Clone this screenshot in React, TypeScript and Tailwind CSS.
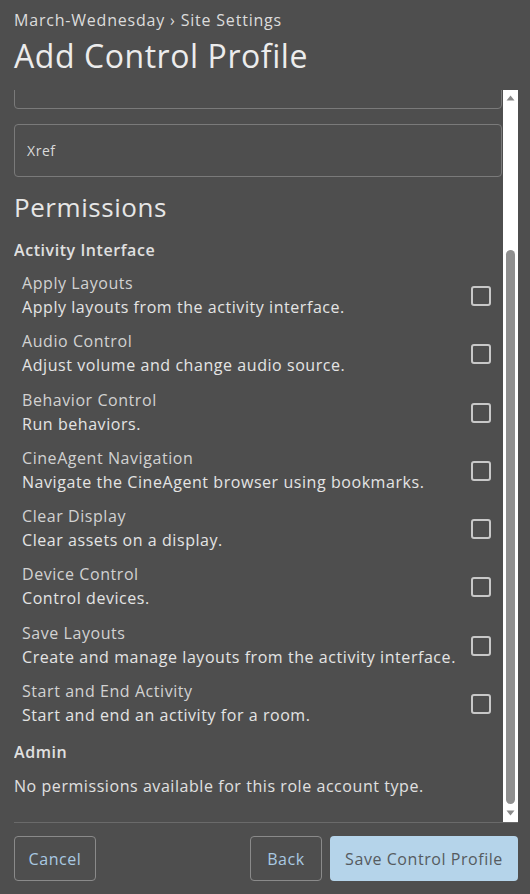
const permissions = [
  { title: "Apply Layouts", desc: "Apply layouts from the activity interface." },
  { title: "Audio Control", desc: "Adjust volume and change audio source." },
  { title: "Behavior Control", desc: "Run behaviors." },
  { title: "CineAgent Navigation", desc: "Navigate the CineAgent browser using bookmarks." },
  { title: "Clear Display", desc: "Clear assets on a display." },
  { title: "Device Control", desc: "Control devices." },
  { title: "Save Layouts", desc: "Create and manage layouts from the activity interface." },
  { title: "Start and End Activity", desc: "Start and end an activity for a room." },
];

function PermissionRow({ title, desc }: { title: string; desc: string }) {
  return (
    <div className="flex items-center pl-2 pr-3 h-[48px]">
      <div className="flex-1 min-w-0">
        <p className="text-[16px] leading-6 text-[#d2d2d2]">{title}</p>
        <p className="text-[16px] leading-6 text-[#e4e4e4]">{desc}</p>
      </div>
      <div className="w-5 h-5 mt-[2px] rounded-[3px] border-2 border-[#c8c8c8] shrink-0" />
    </div>
  );
}

function ScrollBar() {
  return (
    <div className="w-[15px] shrink-0 bg-white flex flex-col items-center">
      <svg width="15" height="16" viewBox="0 0 15 16" className="shrink-0">
        <path d="M3.5 10.5 L7.5 5.5 L11.5 10.5 Z" fill="#8a8a8a" />
      </svg>
      <div className="flex-1 w-full flex flex-col items-center">
        <div className="h-[144px] shrink-0" />
        <div className="w-[9px] flex-1 rounded-full bg-[#8f8f8f]" />
      </div>
      <svg width="15" height="18" viewBox="0 0 15 18" className="shrink-0">
        <path d="M3.5 6.5 L7.5 11.5 L11.5 6.5 Z" fill="#8a8a8a" />
      </svg>
    </div>
  );
}

export default function App() {
  return (
    <div
      className="w-[530px] h-[894px] bg-[#4e4e4e] pl-[14px] pr-[12px] flex flex-col overflow-hidden tracking-[0.035em]"
      style={{ fontFamily: '"Open Sans", "Noto Sans", sans-serif' }}
    >
      <div className="pt-[8px] text-[16px] leading-6 text-[#dcdcdc] font-medium tracking-[0.05em]">
        March-Wednesday › Site Settings
      </div>
      <h1 className="mt-[4px] text-[32px] leading-10 text-[#ececec] font-normal">
        Add Control Profile
      </h1>

      <div className="mt-[14px] h-[733px] flex border-b border-[#6a6a6a]">
        <div className="flex-1 min-w-0 overflow-hidden">
          <div className="-mt-[34px] flex flex-col">
            <div className="h-[53px] mr-[1px] rounded-[4px] border border-[#7a7a7a]" />
            <div className="mt-[15px] h-[53px] mr-[1px] rounded-[4px] border border-[#7a7a7a] flex items-center px-3">
              <span className="text-[14px] text-[#dadada]">Xref</span>
            </div>
            <h2 className="mt-[14px] text-[26px] leading-8 text-[#e6e6e6]">Permissions</h2>
            <h3 className="mt-[15px] text-[16px] leading-6 font-semibold text-[#e0e0e0]">
              Activity Interface
            </h3>
            <div className="mt-[9px] flex flex-col gap-[10.3px]">
              {permissions.map((p) => (
                <PermissionRow key={p.title} title={p.title} desc={p.desc} />
              ))}
            </div>
            <h3 className="mt-[13px] text-[16px] leading-6 font-semibold text-[#e0e0e0]">Admin</h3>
            <p className="mt-[10px] text-[16px] leading-6 text-[#e0e0e0]">
              No permissions available for this role account type.
            </p>
          </div>
        </div>
        <ScrollBar />
      </div>

      <div className="pt-[13px] flex items-center gap-2">
        <button className="h-[45px] w-[82px] rounded-[4px] border border-[#8a8a8a] text-[16px] text-[#a9c9e2]">
          Cancel
        </button>
        <div className="flex-1" />
        <button className="h-[45px] w-[72px] rounded-[4px] border border-[#8a8a8a] text-[16px] text-[#a9c9e2]">
          Back
        </button>
        <button className="h-[45px] w-[188px] rounded-[4px] bg-[#b5d4ea] text-[16px] text-[#555b60]">
          Save Control Profile
        </button>
      </div>
    </div>
  );
}
